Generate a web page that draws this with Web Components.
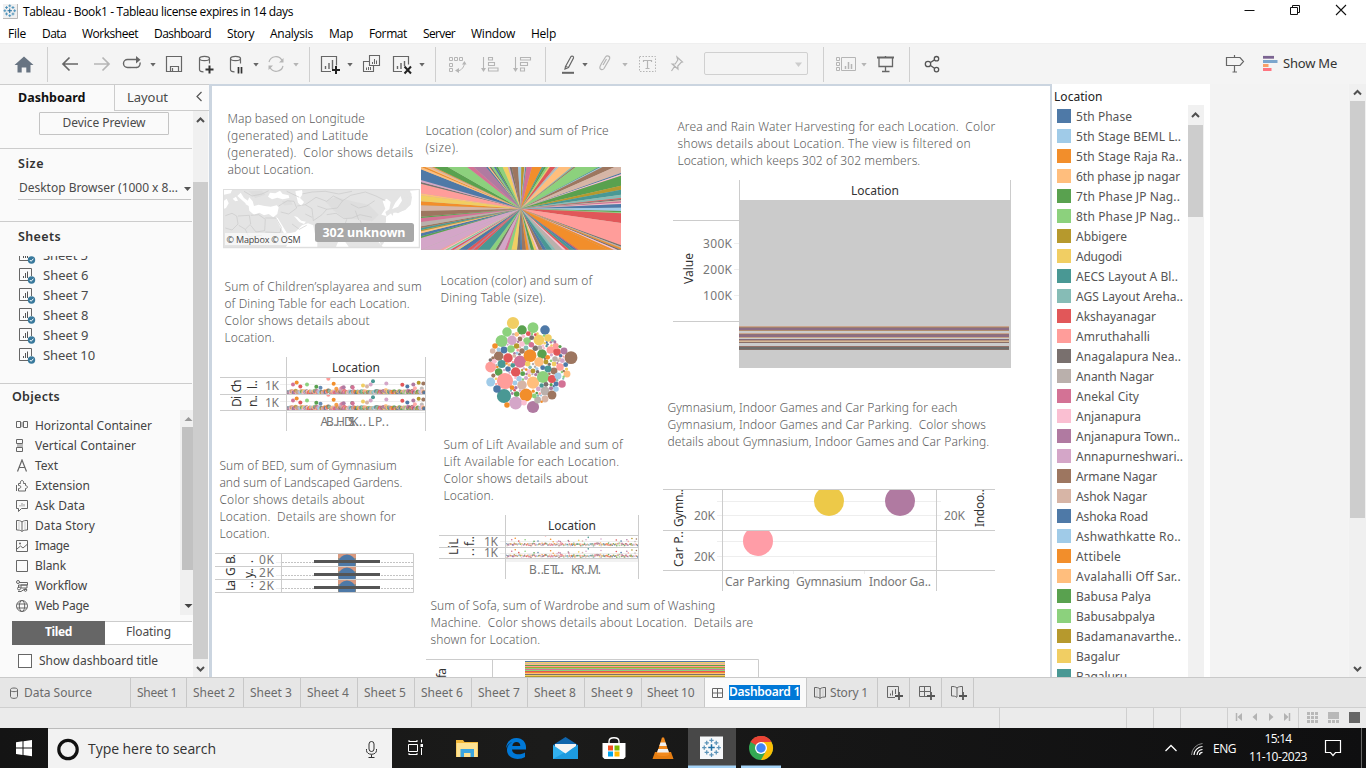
<!DOCTYPE html>
<html lang="en">
<head>
<meta charset="utf-8">
<title>Tableau - Book1</title>
<style>
html,body{margin:0;height:768px;overflow:hidden;background:#f4f4f4}
body{font-family:"Noto Sans","Open Sans",sans-serif;font-size:12px}
</style>
</head>
<body>
<tableau-app></tableau-app>
<script>
const C=['#4e79a7','#a0cbe8','#f28e2b','#ffbe7d','#59a14f','#8cd17d','#b6992d','#f1ce63','#499894','#86bcb6','#e15759','#ff9d9a','#79706e','#bab0ac','#d37295','#fabfd2','#b07aa1','#d4a6c8','#9d7660','#d7b5a6'];
function rng(s){return ()=>{s=(s*1664525+1013904223)>>>0;return s/4294967296}}
function define(name,css,html){
  customElements.define(name,class extends HTMLElement{
    constructor(){
      super();
      const t=document.createElement('template');
      t.innerHTML='<style>*{box-sizing:border-box}svg{display:block;flex:none}'+css+'</style>'+(typeof html==='function'?html(this):html);
      this.attachShadow({mode:'open'}).append(t.content.cloneNode(true));
    }
  });
}
const ft=(s,w,c='')=>`<fit-text w="${w}" class="${c}">${s}</fit-text>`;
/* svg cell whose user space is the window's own coordinate space */
const cell=(x,y,w,h,body,extra='')=>`<svg width="${w}" height="${h}" viewBox="${x} ${y} ${w} ${h}" fill="none" ${extra}>${body}</svg>`;
/* flex row: every item is [left, width, markup]; gaps become margins */
function row(items,from=0){
  let p=from;
  return items.map(([x,w,m])=>{const g=x-p;p=x+w;return `<span style="display:flex;flex:none;align-items:center;width:${w}px;margin-left:${g}px">${m}</span>`}).join('');
}
const T=(x,y,w,s,o='')=>`<text x="${x}" y="${y}" textLength="${w}" lengthAdjust="spacing" ${o}>${s}</text>`;
const V=(x,y,w,s,o='')=>`<text transform="translate(${x} ${y}) rotate(-90)" textLength="${w}" ${o}>${s}</text>`;

/* ---------- title and menu ---------- */
const tabLogo=(x,y,s,c,c2)=>{
  const k=s/16,p=(a,b,r)=>`M${x+(a-r)*k} ${y+b*k}h${2*r*k}M${x+a*k} ${y+(b-r)*k}v${2*r*k}`;
  return `<path d="${p(8,8,2.6)}" stroke="${c2}" stroke-width="${1.2*k}"/><path d="${p(8,2.2,1.7)}${p(8,13.8,1.7)}${p(2.2,8,1.7)}${p(13.8,8,1.7)}" stroke="${c}" stroke-width="${k}"/><path d="${p(4.2,4.2,1.7)}${p(11.8,4.2,1.7)}${p(4.2,11.8,1.7)}${p(11.8,11.8,1.7)}" stroke="${c}" stroke-width="${k}"/>`;
};
define('title-bar',`:host{display:flex;height:24px;background:#fff;align-items:center;color:#000;font:12px "Open Sans",sans-serif}fit-text{margin-top:-1px}`,
 row([[3,15,cell(3,0,15,24,`<rect x="3" y="4" width="14.5" height="15" fill="#f0f0f0"/><path d="M3 18.5h14.5V4" stroke="#b8b8b8"/>`+tabLogo(3,4,13.5,'#3f8ab5','#1c6a9c'))],
 [23,271,ft('Tableau - Book1 - Tableau license expires in 14 days',270)],
 [1244,12,cell(1244,0,12,24,'<path d="M1244.500 10.500h10" stroke="#111"/>')],
 [1289,13,cell(1289,0,13,24,'<path d="M1290.500 7.500h7v7h-7zM1292.500 7.500v-2h7v7h-2" stroke="#111"/>')],
 [1335,13,cell(1335,0,13,24,'<path d="M1336 5l10 10M1346 5l-10 10" stroke="#111" stroke-width="1.100"/>')]]));
define('menu-bar',`:host{display:flex;height:19px;background:#fff;align-items:center;color:#000;font:12px "Open Sans",sans-serif}`,
 row([['File',8,18],['Data',42,24],['Worksheet',82,56],['Dashboard',154,57],['Story',227,27],['Analysis',270,43],['Map',329,24],['Format',369,38],['Server',423,32],['Window',471,44],['Help',531,25]].map(([s,x,w])=>[x,w,ft(s,w)])));

/* ---------- toolbar ---------- */
const G='#666',L='#b5b5b5';
const car=(x,c=G)=>[x-3,7,cell(x-3,43,7,41,`<path d="M${x-2.700} 63h5.400l-2.700 3.600z" fill="${c}"/>`)];
const sep=x=>[x,1,cell(x,43,1,41,`<path d="M${x+.5} 47v35" stroke="#cfcfcf"/>`)];
const ic=(x,w,b)=>[x,w,cell(x,43,w,41,b)];
const db=x=>`<ellipse cx="${x}" cy="58.500" rx="5" ry="2.200"/><path d="M${x-5} 58.500v11c0 1.500 2 2.300 4 2.300M${x+5} 58.500v5"/>`;
define('tool-bar',`:host{display:flex;height:41px;background:#f4f4f4;border-top:1px solid #efefef;align-items:center;color:#333}svg{margin-top:-1px}`,
 row([
 ic(14,20,`<path d="M24 56.500l9.500 8.500h-3v7.500h-4.200v-5h-4.600v5h-4.200V65h-3z" fill="#687482"/>`),sep(47),
 ic(61,18,`<path d="M63 64h15M69.500 57.500L63 64l6.500 6.500" stroke="${G}" stroke-width="1.700"/>`),
 ic(93,18,`<path d="M94 64h15M102.500 57.500L109 64l-6.500 6.500" stroke="${L}" stroke-width="1.700"/>`),
 ic(122,20,`<path d="M131 67.500h-3.500a4 4 0 010-8h9M136.500 67.500a4 4 0 003.500-5" stroke="${G}" stroke-width="1.400"/><path d="M136 56v7.500l4.500-3.800z" fill="${G}"/><path d="M131 67.500h6" stroke="${G}" stroke-width="1.400"/>`),
 car(153),
 ic(165,18,`<path d="M166.500 56.500h15v15h-15zM170.500 71v-4.500h8V71M172.500 68v3" stroke="${G}" stroke-width="1.200"/>`),
 ic(198,17,`<g stroke="${G}" stroke-width="1.200">${db(204.500)}</g><path d="M209.500 65.500v8M205.500 69.500h8" stroke="#333" stroke-width="2"/>`),
 ic(229,17,`<g stroke="${G}" stroke-width="1.200">${db(235.500)}</g><path d="M238.500 67v6.500M241.500 67v6.500" stroke="#333" stroke-width="1.700"/>`),
 car(256),
 ic(267,18,`<path d="M269 62a7 7 0 0113-1.500M283 66a7 7 0 01-13 1.500" stroke="${L}" stroke-width="1.200"/><path d="M283.500 58v4.500h-4.500zM268.500 70v-4.500h4.500z" fill="${L}"/>`),
 car(296,L),sep(309),
 ic(320,21,`<path d="M331 71.500h-9.500v-15h15v9" stroke="${G}" stroke-width="1.200"/><path d="M325.500 69v-3M329 69v-6M332.500 69v-9" stroke="${G}" stroke-width="1.400"/><path d="M336 66v8M332 70h8" stroke="#222" stroke-width="2"/>`),
 car(350),
 ic(362,19,`<path d="M369.500 55.500h10v10h-10zM369 61.500h-5.500v10h10V66" stroke="${G}" stroke-width="1.100"/><path d="M372.500 64v-2M374.500 64v-5M376.500 64v-3.500M366.500 70v-2.500M368.500 70v-3M370.500 70v-3" stroke="${G}"/>`),
 ic(392,21,`<path d="M402 71.500h-8.500v-15h15v8" stroke="${G}" stroke-width="1.200"/><path d="M397.500 69v-3M401 69v-6M404.500 66v-5" stroke="${G}" stroke-width="1.400"/><path d="M404.500 66.500l6.500 7M411 66.500l-6.500 7" stroke="#222" stroke-width="2"/>`),
 car(422),sep(435),
 ic(447,20,`<g stroke="${L}"><path d="M449.500 57.500h3v3h-3zM454.500 57.500h3v3h-3zM459.500 57.500h3v3h-3zM449.500 63.500h3v3h-3zM449.500 68.500h3v3h-3zM464.500 62c0 5-3 8.500-7 9"/></g><path d="M462 64.500l2.500-3.500 2 3.500zM459 68v5l-4-2.500z" fill="${L}"/>`),
 ic(480,19,`<g stroke="${L}" stroke-width="1.100"><path d="M483.500 57v13"/><path d="M488.500 57.500h4v2.500h-4zM488.500 62.500h6v3h-6zM488.500 68h9.500v3h-9.500z"/></g><path d="M481 68h5l-2.500 4z" fill="${L}"/>`),
 ic(512,20,`<g stroke="${L}" stroke-width="1.100"><path d="M515.500 57v13"/><path d="M520.500 57.500h10v2.500h-10zM520.500 62.500h7v3h-7zM520.500 68h4v3h-4z"/></g><path d="M513 68h5l-2.500 4z" fill="${L}"/>`),
 sep(545),
 ic(561,15,`<path d="M565.500 66.500l5.500-10c1-1 3 0 2.500 1.500l-5 9.500-3.500 1.500zM565.500 66.500l3 1" stroke="${G}" stroke-width="1.200"/><path d="M562 72.800h12" stroke="${G}" stroke-width="2"/>`),
 car(585),
 ic(598,14,`<path d="M601.500 63.500l4-6.500c1.500-2 5-1 4 2l-5.500 9.500c-1.500 2-5 1-4-1.700M603 65l3.500-6M601.500 63.500l-1.700 3.500" stroke="${L}" stroke-width="1.200"/>`),
 car(625,L),
 ic(638,19,`<path d="M639.500 56.500h16v15h-16z" stroke="${L}" stroke-dasharray="1.500 1.500"/><path d="M643.500 62v-1.500h8V62M647.500 60.500v8M645.500 68.500h4" stroke="${L}" stroke-width="1.200"/>`),
 ic(670,14,`<path d="M677 57l5.500 5-1.500.5-3.200 3.500.2 3-5.800-5 3 0 2.600-4zM674.500 66.500l-3 4.500" stroke="${L}" stroke-width="1.200"/>`),
 ic(703,106,`<rect x="704.500" y="52.500" width="103" height="22" rx="1.500" stroke="#d0d0d0"/><path d="M795 62.500h7l-3.500 4.500z" fill="#ccc"/>`),
 sep(823),
 ic(835,22,`<path d="M836.500 57.500h3v3h-3zM836.500 62.500h3v3h-3zM836.500 67.500h3v3h-3zM841.500 57.500h14v13h-14z" stroke="${L}"/><path d="M845.500 69v-3M848.500 69v-7M851.500 69v-5" stroke="${L}" stroke-width="1.500"/>`),
 car(864,L),
 ic(876,20,`<path d="M877 57.500h17" stroke="${G}" stroke-width="2"/><path d="M879 58v8.500h13.500V58M885.500 56v1M885.500 66.500v5M882 71.500h7.500" stroke="${G}" stroke-width="1.300"/>`),
 sep(909),
 ic(924,17,`<g stroke="#555" stroke-width="1.300"><circle cx="928" cy="64" r="2.700"/><circle cx="936.500" cy="58.700" r="2.200"/><circle cx="936.500" cy="69.600" r="2.200"/><path d="M930.500 62.500l4-2.600M930.500 65.500l4 2.800"/></g>`),
 ic(1225,20,`<path d="M1226.500 57.500h13.500l3.500 4-3.500 4h-13.500zM1234.500 55v2M1234.500 65.500v7M1232.500 72h4.500" stroke="${G}" stroke-width="1.200"/>`),
 ic(1262,17,`<path d="M1263 57.300h11" stroke="#7b6491" stroke-width="2.800"/><path d="M1263 61.500h14.500" stroke="#7ca6cd" stroke-width="3"/><path d="M1263 65.500h5.500" stroke="#f9a067" stroke-width="3"/><path d="M1263 69.500h8.500" stroke="#ff7580" stroke-width="3"/>`),
 [1283,56,`<span style="font-size:13px;margin-top:-2px">${ft('Show Me',54)}</span>`]
 ]));

/* ---------- left pane ---------- */
const sheetIco=`<svg width="17" height="18" viewBox="0 0 17 18" fill="none"><path d="M9 13.500H.500V1.500h12V9" stroke="#666"/><path d="M4.500 11V9M6.500 11V6M8.500 11V4.500" stroke="#555"/><circle cx="12.500" cy="13" r="3.700" fill="#38799c"/><path d="M10.800 13l1.300 1.300 2.300-2.600" stroke="#fff"/></svg>`;
const oi={
 'Horizontal Container':[117,'<path d="M.5 2.500h4v6h-4zM7.500 2.500h4v6h-4z" stroke="#666"/><path d="M5 3h2v5H5z" fill="#bbb"/>'],
 'Vertical Container':[101,'<path d="M.5.500h6v4h-6zM.5 8.500h6v4h-6z" stroke="#666"/><path d="M1 5h6v3H1z" fill="#bbb"/>'],
 'Text':[23,'<path d="M1.500 12.500L6 1l4.500 11.500M3 8.500h6" stroke="#666" stroke-width="1.200"/>'],
 'Extension':[55,'<path d="M2.500 12h7V9.500c1.500 0 2-1 2-1.500s-1-1.500-2-1.500V4.500H7.500c.5-2-.5-3-1.500-3S4 2.500 4.500 4.500h-2v2c2 0 2.200.5 2.200 1.500S4 9.500 2.500 9.500zM.5 6v6" stroke="#666"/>'],
 'Ask Data':[50,'<path d="M.5 1.500h11v8h-6l-3 3v-3h-2z" stroke="#666"/><path d="M4 7.500V6M6 7.500V4M8 7.500V5" stroke="#999"/>'],
 'Data Story':[60,'<path d="M6 3C4.500 1.500 2.500 1.500.5 1.500v9.500c2 0 4 0 5.500 1.500 1.500-1.500 3.500-1.500 5.500-1.500V1.500C9.500 1.500 7.500 1.500 6 3zM6 3v9" stroke="#666"/><path d="M3 3v7M9 3v7" stroke="#ccc"/>'],
 'Image':[34,'<path d="M.5 1.500h11v11H.5zM1 10l3.500-3 2.500 2 4-3.500" stroke="#666"/><circle cx="4" cy="4.500" r="1" fill="#666"/>'],
 'Blank':[31,'<path d="M.5 1.500h11v11H.5z" stroke="#666"/>'],
 'Workflow':[52,'<path d="M3 3.500h8.500v2.500H2.500v3M5 6h6v3H5zM2 12.500h3l3-2h3" stroke="#666"/><circle cx="2" cy="3" r="1.500" stroke="#666"/><circle cx="3" cy="9.500" r="1.500" stroke="#666"/><circle cx="9.500" cy="11" r="1.300" stroke="#666"/>'],
 'Web Page':[54,'<circle cx="6" cy="7" r="5.500" stroke="#666"/><ellipse cx="6" cy="7" rx="2.700" ry="5.500" stroke="#666"/><path d="M1 5h10M1 9h10" stroke="#666"/>']
};
define('side-pane',`
:host{display:flex;flex-direction:column;width:209px;height:593px;background:#fafafa;color:#4a4a4a;border-top:1px solid #ccc}
.tabs{display:flex;height:26px;flex:none;font-size:13px}
.tabs b{width:114px;padding:4px 0 0 18px;color:#111;font-weight:700;font-size:12.500px}
.tabs span{display:flex;flex:1;border-left:1px solid #ccc;border-bottom:1px solid #ccc;padding:3px 6px 0 12px;justify-content:space-between}
.tabs svg{margin-top:-1px}
.body{display:grid;grid-template-columns:193px 15px;flex:1;min-height:0}
.c{display:flex;flex-direction:column}
.c>*{flex:none}
.btn{margin:1px 0 0 39px;width:130px;height:23px;border:1px solid #c4c4c4;border-radius:1px;text-align:center;line-height:20px}
hr{border:0;border-top:1px solid #ccc;margin:0;width:192px;height:1px}
h4{margin:0 0 0 18px;font-size:12.500px;font-weight:600;color:#333;height:17px;line-height:17px}
.drop{display:flex;margin:8px 0 0 18px;padding-left:1px;width:173px;height:20px;border-bottom:1px solid #c4c4c4;justify-content:space-between;line-height:15px}
.list{height:127px;overflow:hidden;margin-top:11px}
.list div{display:flex;height:20px;padding-left:19px;gap:7px;line-height:19px;font-size:13px}
.list div svg{margin-top:1px}
.obj{display:grid;grid-template-columns:180px 13px;height:205px;margin-top:5px}
.obj .o{padding-top:6px}
.o div{display:flex;height:20px;align-items:center;padding-left:16px;gap:7px;color:#444;font-size:12px}
.o fit-text{margin-top:-1px}
.seg{display:flex;margin:6px 0 0 12px;width:180px;height:24px;line-height:22px;text-align:center}
.seg b{width:93px;background:#666;color:#fff}
.seg span{flex:1;border:1px solid #ccc;border-width:1px 0;background:#fff;line-height:20px}
.chk{display:flex;gap:7px;margin:8px 0 0 18px;align-items:center;height:15px;color:#444}
.chk i{width:14px;height:14px;border:1px solid #666;background:#fff}.chk fit-text{margin-top:-1px}`,
`<div class="tabs"><b>${ft('Dashboard',67.5)}</b><span>${ft('Layout',41)}<svg width="8" height="20" viewBox="0 0 8 20" fill="none"><path d="M6.500 5L2 9.500 6.500 14" stroke="#555" stroke-width="1.200"/></svg></span></div>
<div class="body"><div class="c">
<div class="btn">${ft('Device Preview',83)}</div>
<hr style="margin-top:13px"><h4 style="margin-top:6px">${ft('Size',26)}</h4>
<div class="drop">${ft('Desktop Browser (1000 x 8...',159)}<svg width="7" height="17" viewBox="0 0 7 17"><path d="M0 7h7l-3.500 4z" fill="#555"/></svg></div>
<hr style="margin-top:21px"><h4 style="margin-top:6px">${ft('Sheets',43)}</h4>
<div class="list"><div style="margin-top:-10px">${sheetIco}${ft('Sheet 5',45)}</div>${[6,7,8,9,10].map(n=>`<div>${sheetIco}${ft('Sheet '+n,n>9?52:45.500)}</div>`).join('')}</div>
<hr><h4 style="margin:4px 0 0 12px">${ft('Objects',48)}</h4>
<div class="obj"><div class="o">${Object.entries(oi).map(([n,[w,p]])=>`<div><svg width="12" height="14" viewBox="0 0 12 14" fill="none">${p}</svg>${ft(n,w)}</div>`).join('')}</div>
${cell(180,410,13,205,'<path d="M180 410h13v205h-13z" fill="#f0f0f0"/><path d="M182 427h11v143h-11z" fill="#c1c1c1"/><path d="M184.500 421h8l-4-4z" fill="#999"/><path d="M184.500 604h8l-4 4z" fill="#444"/>')}</div>
<div class="seg"><b>${ft('Tiled',27)}</b><span>${ft('Floating',45)}</span></div>
<div class="chk"><i></i>${ft('Show dashboard title',119)}</div>
</div>
${cell(193,111,15,566,'<path d="M193 111h15v566h-15z" fill="#f0f0f0"/><path d="M193 182h15v477h-15z" fill="#cdcdcd"/><path d="M197 122l3.500-3.500 3.500 3.500M197 667l3.500 3.500 3.500-3.500" stroke="#505050" stroke-width="2"/>')}
</div>`);

/* ---------- dashboard objects ---------- */
define('float-object',`:host{display:block;position:absolute}`,`<slot></slot>`);
define('view-caption',`:host{display:flex;flex-direction:column;color:#5c5c5c;font:12px "Noto Sans",sans-serif;font-weight:300}::slotted(*){height:17px;line-height:17px}`,`<slot></slot>`);
const obj=(x,y,w,h,m)=>`<float-object style="left:${x-212}px;top:${y-86}px;width:${w}px;height:${h}px">${m}</float-object>`;
const cap=(x,y,ls)=>obj(x+.4,y-9,340,ls.length*17,`<view-caption>${ls.map(([s,w])=>ft(s,w)).join('')}</view-caption>`);
const chart=(x,y,w,h,b)=>obj(x,y,w,h,`<chart-view>${cell(x,y,w,h,b,'font-family="Noto Sans,sans-serif" font-size="12"')}</chart-view>`);
define('chart-view',`:host{display:block}`,`<slot></slot>`);

function map(){
  const z=(a)=>a.replace(/(-?[\d.]+),(-?[\d.]+)/g,(m,a,b)=>(212+a/3).toFixed(1)+' '+(84+b/3).toFixed(1));
  return `<rect x="223.500" y="189.500" width="196" height="58" fill="#e4e4e4" stroke="#dedede" stroke-width="1.500"/>
  <path fill="#fff" d="${z('M36,318L60,318 56,328 36,332ZM36,350L44,344 50,358 42,372 36,374ZM62,344L72,338 78,350 70,352ZM76,336L86,326 96,342 116,356 106,362 92,350ZM112,340L122,352 126,366 140,362 158,366 176,368 194,364 200,370 196,390 184,400 170,390 156,394 142,386 126,392 112,380 110,366 100,360 106,354ZM168,338L174,326 190,328 204,320 212,330 230,334 232,342 212,346 196,341 180,346ZM250,322L270,318 272,330 264,342 276,354 268,366 258,356ZM190,400L197,402 224,446 217,449 204,428ZM246,396L256,399 268,410 282,413 276,420 262,414ZM222,450L250,444 270,424 288,418 304,424 308,446 316,470 316,488 222,488 236,466ZM378,474L400,474 410,488 372,488ZM512,352L524,344 536,354 532,376 520,384 524,396 508,392 520,374ZM522,398L538,388 560,384 580,378 596,362 600,340 594,320 620,318 620,488 512,488 496,470 506,440 522,414ZM540,376L550,356 566,336 570,350 558,368Z')}"/>
  <path fill="#e4e4e4" d="${z('M544,382L562,372 574,352 578,338 588,342 586,362 576,378 558,388ZM576,332L584,322 600,330 590,338ZM536,388L544,386 542,396ZM510,424L516,418 514,432ZM500,466L512,458 516,476 508,486Z')}"/>
  <path fill="#d9d9d9" d="${z('M340,352L372,340 420,352 470,362 500,392 480,412 440,406 400,404 366,380ZM110,322L150,320 160,332 130,342ZM210,352L236,350 242,362 216,364Z')}" opacity=".55"/>
  <path stroke="#c6c6c6" stroke-width=".6" d="${z('M40,395L60,388 74,396 78,420 60,438 40,432M78,396L112,394 116,420 100,436 80,424M116,394L140,392 160,406 158,440 132,444 116,424M160,402L192,402 208,430 204,446 160,444M100,436L110,458 150,454M200,366L226,350 246,352 254,372 230,390 206,384M256,366L280,362 300,374 304,410M280,362L312,340 344,352 364,336 392,350 376,372 344,376 316,366M304,410L330,392 344,376M344,392L372,388 396,404 420,402 444,392 480,400M392,350L416,334 460,324 492,336 520,350M416,360L440,372 464,366 488,350M224,322L262,340M270,330L300,324 340,322 380,330 420,322M96,322L120,336 150,330 170,320M444,408L452,430 468,440M404,406L398,424M280,390L300,400M430,380L440,408M240,420L262,436 284,424')}"/>
  <rect x="225" y="233" width="77" height="12" fill="#fff" fill-opacity=".65"/>
  ${T(226.500,243,74,'© Mapbox © OSM','font-size="9" fill="#444" font-family="Open Sans,sans-serif"')}
  <rect x="315" y="223" width="99" height="19" rx="2.500" fill="#a8a8a8"/>
  ${T(322.500,237,83,'302 unknown','font-weight="700" font-size="12.500" fill="#fff"')}`;
}
function burst(){
  /* perimeter runs: walk the rectangle clockwise; [end, colour] */
  const cx=520.7,cy=208.7,out=[];
  const runs={t:[[640,2],[650,3],[660,19],[666,2],[707,4],[766,5],[785,14],[822,16],[828,0],[833,3],[838,12],[846,5],[852,0],[858,4],[872,5],[888,7],[893,17],[899,12],[918,18],[928,1],[937,6],[940,17],[943,8],[960,14],[990,2],[995,8],[1002,4],[1009,5],[1014,7],[1030,10],[1036,13],[1040,1],[1079,3],[1085,9],[1091,18],[1160,5],[1166,8],[1172,1],[1208,18],[1227,19]],
  r:[[267,19],[271,0],[275,15],[305,4],[317,6],[332,8],[342,9],[345,10],[349,12],[352,19],[356,14],[360,15],[371,0],[381,1],[385,4],[388,5],[417,10],[484,11],[488,12],[492,13],[497,2]],
  b:[[1216,12],[1205,15],[1188,2],[1100,2],[1094,10],[1085,0],[1072,8],[1061,10],[1052,15],[1030,13],[1020,9],[1003,8],[992,0],[980,18],[974,15],[966,7],[956,4],[950,13],[942,2],[930,18],[924,0],[915,12],[898,7],[886,5],[878,14],[858,17],[850,12],[833,5],[795,8],[784,10],[778,16],[765,10],[740,0],[733,7],[725,17],[715,10],[708,1],[700,5],[693,15],[684,11],[627,17]],
  l:[[462,17],[457,4],[448,0],[442,3],[438,6],[432,8],[427,18],[414,13],[402,14],[398,4],[380,18],[364,19],[352,2],[334,7],[328,3],[299,11],[294,12],[288,17],[256,0],[249,3]]};
  let p=[627,249];
  const pt=([a,b])=>`${(212+a/3).toFixed(2)} ${(84+b/3).toFixed(2)}`;
  for(const e of 'trbl')for(const [v,c] of runs[e]){
    const q=e=='t'?[v,249]:e=='r'?[1227,v]:e=='b'?[v,497]:[627,v];
    out.push(`<path d="M${cx} ${cy}L${pt(p)}L${pt(q)}z" fill="${C[c]}"/>`);p=q;
  }
  return '<rect x="421" y="167" width="200" height="83" fill="#bba"/>'+out.join('');
}
function dots(x,y,w,h,base,r,n,seed,small){
  const R=rng(seed);let s='';
  for(let i=0;i<n;i++){
    const px=x+w*(i+R())/n,u=R();
    const wave=small?1.2:1.6*Math.abs(Math.sin(i*.16));
    const py=base-(u<.95?R()*(small?2:2)+R()*wave:3+R()*h*.3);
    s+=`<circle cx="${px.toFixed(1)}" cy="${py.toFixed(1)}" r="${r}" fill="${C[Math.floor(R()*20)]}" opacity=".85"/>`;
  }
  const k=small?132/138:1;
  [[242,362,14],[253,356,2],[264,368,10],[284,362,5],[312,369,4],[348,345,11],[364,360,2],[394,370,16],[421,370,14],[452,365,7],[464,368,19],[475,362,17],[482,352,8],[522,359,17],[570,363,10],[585,368,0],[603,362,16],[619,357,6],[633,359,18]].forEach(([a,b,c])=>{
    s+=`<circle cx="${x+(a-224)/3*k}" cy="${base-(389-b)/3*(small?.7:1)}" r="${small?.8:2}" fill="${C[c]}"/>`});
  return s;
}
function scatter1(){
  return `<clipPath id="a"><path d="M287 378h138v16h-138z"/></clipPath><clipPath id="b"><path d="M287 395h138v15h-138z"/></clipPath>
  <path d="M280 384.500h145M280 401.500h145M287 412.500h138" stroke="#eee"/>
  <g clip-path="url(#a)">${dots(287,378,138,13,393.5,2,230,7)}</g><g clip-path="url(#b)">${dots(287,395,138,13,409.5,2,230,7)}</g>
  <path d="M286.500 357v74M425.500 357v74M220 377.500h205M220 394.500h205M220 410.500h205" stroke="#ccc"/>
  ${T(332,372,48,'Location','fill="#333"')}${T(265,390,14,'1K','fill="#777"')}${T(265,407,14,'1K','fill="#777"')}
  ${V(240.5,392.5,13,'Ch','fill="#333"')}${V(240.5,407,11,'Di','fill="#333"')}${V(257,389,9,'l..','fill="#333"')}${V(257,407,12,'n..','fill="#333"')}
  <g fill="#777">${T(320.5,426,16,'A..')}${T(326,426,16,'B..')}${T(336,426,8,'H')}${T(344,426,15,'D..')}${T(348,426,8,'S')}${T(351,426,15,'K..')}${T(368,426,6,'L')}${T(375,426,14,'P..')}</g>`;
}
function scatter2(){
  return `<clipPath id="c"><path d="M506 536h132v11h-132z"/></clipPath><clipPath id="d"><path d="M506 548h132v10h-132z"/></clipPath>
  <path d="M500 541.500h138M500 553.500h138" stroke="#eee"/><path d="M506 560.500h132" stroke="#f2f2f2" stroke-width="3"/>
  <g clip-path="url(#c)">${dots(506,536,132,9,546,.8,230,7,1)}</g><g clip-path="url(#d)">${dots(506,548,132,9,557.5,.8,230,7,1)}</g>
  <path d="M505.500 515v64M638.500 515v64M439 535.500h199M439 547.500h199M439 558.500h199" stroke="#ccc"/>
  ${T(548,530,48,'Location','fill="#333"')}${T(484,546,14,'1K','fill="#777"')}${T(484,557,14,'1K','fill="#777"')}
  <g fill="#333"><svg x="439" y="537" width="40" height="10" viewBox="439 537 40 10">${V(458,555,20,'LiLi')}${V(474,546,10,'f..')}</svg><svg x="439" y="549" width="40" height="10" viewBox="439 549 40 10">${V(458,555,10,'Li')}${V(474,556,8,'..')}</svg></g>
  <g fill="#777">${T(529,574,15,'B..')}${T(543,574,8,'E')}${T(550,574,14,'T..')}${T(554,574,9,'I..')}${T(571,574,8,'K')}${T(577,574,13,'R..')}${T(588,574,13,'M.')}</g>`;
}
function bubbles(){
  const b=[[249,177,18,7],[231,204,14,5],[276,198,14,4],[309,191,16,5],[345,198,14,0],[215,231,18,5],[246,229,14,17],[327,228,16,7],[354,222,11,7],[291,231,11,5],[195,246,8,2],[188,261,8,19],[206,276,14,18],[222,258,10,0],[243,255,11,5],[234,282,14,10],[270,293,18,14],[300,275,19,2],[336,270,14,4],[361,258,11,11],[381,264,11,10],[402,261,10,16],[423,281,19,18],[377,246,9,11],[182,309,16,11],[215,300,12,8],[257,324,14,10],[327,294,14,3],[206,324,11,4],[225,351,24,11],[182,354,13,1],[222,396,21,8],[201,375,11,0],[257,417,19,17],[309,429,18,16],[288,393,19,2],[309,356,18,3],[276,363,14,19],[339,339,18,5],[366,345,12,10],[345,381,13,13],[366,393,13,18],[396,360,11,14],[411,330,10,3],[390,309,11,11],[372,321,10,18],[354,315,10,8],[384,336,10,1],[345,405,10,19],[323,408,10,13],[231,423,8,2],[260,246,8,6],[372,300,7,7],[348,294,7,6],[375,285,8,13],[407,302,7,0],[234,315,8,0],[276,240,8,15],[276,261,8,18],[270,225,7,18],[305,221,7,12],[260,390,8,4],[260,211,7,3],[295,209,7,10],[316,253,8,12],[288,252,7,9],[304,242,8,14],[330,251,7,13],[246,371,7,2],[255,357,7,1],[267,344,8,1],[288,342,6,17],[297,323,7,15],[309,321,7,6],[338,311,7,0],[181,288,5,12],[189,282,5,18],[193,292,7,15],[206,257,6,1],[378,360,7,0],[378,375,8,1],[325,375,7,17],[348,361,7,12],[313,396,7,5],[282,416,8,15],[397,290,7,17],[353,280,7,2],[293,299,8,7],[248,304,7,8],[278,329,7,4],[363,373,6,16]];
  const R=rng(41),all=b.slice();
  for(let i=0;i<9000;i++){
    const t=R()*6.283,q=Math.sqrt(R())*112,x=298+q*Math.cos(t),y=311+q*Math.sin(t),r=3+R()*3.5;
    if(all.every(c=>Math.hypot(c[0]-x,c[1]-y)>c[2]+r-.8))all.push([x,y,r,Math.floor(R()*20)]);
  }
  return all.map(([x,y,r,c])=>`<circle cx="${(430+x/3).toFixed(2)}" cy="${(264+y/3).toFixed(2)}" r="${(r/3+.1).toFixed(2)}" fill="${C[c]}"/>`).join('');
}
function box(){
  let s='';
  [[554,566],[567,579],[580,592]].forEach(([t,b])=>{
    s+=`<svg x="282" y="${t}" width="131" height="${b-t}" viewBox="282 ${t} 131 ${b-t}"><path d="M282 ${t+8.500}h131" stroke="#c4c4c4" stroke-dasharray="2 1"/><path d="M338 ${t}h18v13h-18z" fill="#d99a80"/><path d="M338 ${t+4}h18v9h-18z" fill="#9a9080"/><circle cx="347" cy="${t+9}" r="8.600" fill="#4e79a7"/><path d="M314 ${t+7.5}h66" stroke="#555" stroke-width="3"/></svg>`});
  return s+`<path d="M276 562.500h5M276 575.500h5M276 588.500h5" stroke="#eee"/><path d="M215 553.500h198.500v39H215M215 566.500h198M215 579.500h198M281.500 554v38" stroke="#ccc"/>
  <g fill="#777">${T(259,564,15,'0K')}${T(259,577,15,'2K')}${T(259,590,15,'2K')}</g>
  <g fill="#333">${V(235,564,10,'B.')}${V(235,576,8,'G')}${V(235,591,11,'La')}${V(253,563,3,'.')}${V(253,578,10,'y..')}${V(253,588,7,'..')}</g>`;
}
function area(){
  const st=[[326,1,'#c9a58f'],[327,1,'#a08070'],[328,2,'#8c6d84'],[330,1,'#b08c6e'],[333,1,'#c9a58f'],[334,1,'#8f7077'],[335,2,'#8c6d84'],[337,1,'#c6a488'],[339,1,'#806a78'],[340,1,'#b89582'],[341,1,'#d5b795'],[342,1,'#8a6f68'],[346,1,'#957068'],[347,2,'#6d6d6b'],[349,1,'#82706a']];
  return `<path d="M739 200h272v168H739z" fill="#cbcbcb"/>${st.map(([y,h,c])=>`<path d="M739 ${y}h270v${h}h-270z" fill="${c}"/>`).join('')}
  <path d="M739.500 180v20M1010.500 180v20M673 220.500h66M673 321.500h66" stroke="#ccc"/><path d="M734 243.500h5M734 269.500h5M734 295.500h5" stroke="#eee"/>
  ${T(851,195,48,'Location','fill="#333"')}<g fill="#777">${T(703,248,29,'300K')}${T(703,274,29,'200K')}${T(703,300,29,'100K')}</g>${V(693,284,31,'Value','fill="#333"')}`;
}
function gym(){
  return `<path d="M717 501.500h224M717 515.500h224M717 541.500h219M717 556.500h219M793.500 571v3M864.500 571v3" stroke="#eee"/>
  <clipPath id="e"><path d="M723 490h213v40H723z"/></clipPath><clipPath id="f"><path d="M723 531h213v39H723z"/></clipPath>
  <g clip-path="url(#e)"><circle cx="829" cy="501" r="15" fill="#edc948"/><circle cx="900" cy="501" r="15" fill="#b07aa1"/></g><g clip-path="url(#f)"><circle cx="758" cy="541" r="15" fill="#ff9da7"/></g>
  <path d="M663 489.500h332M663 530.500h332M663 570.500h332M722.500 490v101M936.500 490v101" stroke="#ccc"/>
  <g fill="#777">${T(694,520,21,'20K')}${T(694,561,21,'20K')}${T(944,520,21,'20K')}${T(725,586,65,'Car Parking')}${T(796,586,66,'Gymnasium')}${T(869,586,62,'Indoor Ga..')}</g>
  <g fill="#333">${V(683,527,38,'Gymn..')}${V(683,567,36,'Car P..')}${V(984,527,38,'Indoo..')}</g>`;
}
function sofa(){
  const k=[0,7,19,3,4,11,6,5,14,5,10,2,3,12,7,6],cs=k.map((c,i)=>`<path d="M525 ${661+i}h200v1h-200z" fill="${C[c]}"/>`).join('');
  return `<path d="M426 659.500h332.500V677M492.500 660v17" stroke="#ccc"/>${cs}${V(446,678,10,'fa','fill="#333"')}`;
}
define('dash-canvas',`:host{display:block;position:relative;width:843px;height:593px;background:#fff;border:solid #cbd5e0;border-width:2px 2px 0 3px;overflow:hidden}`,
 cap(227,119,[['Map based on Longitude',137.5],['(generated) and Latitude',141],['(generated).  Color shows details',186],['about Location.',86.5]])+
 chart(223,189,197,60,map())+
 cap(425,131,[['Location (color) and sum of Price',183.5],['(size).',33.5]])+chart(421,167,200,83,burst())+
 cap(224,287,[["Sum of Children’splayarea and sum",197.5],['of Dining Table for each Location.',185.5],['Color shows details about',145.5],['Location.',50.5]])+chart(220,356,207,76,scatter1())+
 cap(440,281,[['Location (color) and sum of',152],['Dining Table (size).',105.5]])+chart(484,314,98,102,bubbles())+
 cap(219,466,[['Sum of BED, sum of Gymnasium',177.5],['and sum of Landscaped Gardens.',183],['Color shows details about',145.5],['Location.  Details are shown for',176.5],['Location.',50.5]])+chart(215,552,200,42,box())+
 cap(443,445,[['Sum of Lift Available and sum of',179.5],['Lift Available for each Location.',176],['Color shows details about',145],['Location.',50.5]])+chart(439,514,201,66,scatter2())+
 cap(430,606,[['Sum of Sofa, sum of Wardrobe and sum of Washing',285],['Machine.  Color shows details about Location.  Details are',323],['shown for Location.',110]])+chart(426,658,334,19,sofa())+
 cap(677,127,[['Area and Rain Water Harvesting for each Location.  Color',318],['shows details about Location. The view is filtered on',293.5],['Location, which keeps 302 of 302 members.',243]])+chart(672,180,340,190,area())+
 cap(667,408,[['Gymnasium, Indoor Games and Car Parking for each',290],['Gymnasium, Indoor Games and Car Parking.  Color shows',318.5],['details about Gymnasium, Indoor Games and Car Parking.',322]])+chart(663,488,333,104,gym()));

/* ---------- legend ---------- */
const leg=[['5th Phase',56],['5th Stage BEML L..',105],['5th Stage Raja Ra..',106],['6th phase jp nagar',104],['7th Phase JP Nag..',104],['8th Phase JP Nag..',104],['Abbigere',51],['Adugodi',46],['AECS Layout A Bl..',102],['AGS Layout Areha..',107],['Akshayanagar',80],['Amruthahalli',74],['Anagalapura Nea..',105],['Ananth Nagar',78],['Anekal City',63],['Anjanapura',65],['Anjanapura Town..',104],['Annapurneshwari..',107],['Armane Nagar',81],['Ashok Nagar',71],['Ashoka Road',72],['Ashwathkatte Ro..',105],['Attibele',45],['Avalahalli Off Sar..',105],['Babusa Palya',75],['Babusabpalya',79],['Badamanavarthe..',105],['Bagalur',44],['Bagaluru',51]];
define('color-legend',`:host{display:grid;grid-template-columns:136px 22px;grid-template-rows:20px 573px;width:158px;height:593px;background:#fff;color:#555;overflow:hidden}
h5{grid-column:1/3;margin:0;font-size:12px;font-weight:400;color:#222;padding:4px 0 0 2px;height:20px}
.i{display:flex;height:20px;align-items:center;padding-left:5px;gap:5px}.i i{width:14px;height:14px;flex:none}.l{padding-top:2px}`,
`<h5>${ft('Location',48.5)}</h5><div class="l">${leg.map(([s,w],i)=>`<div class="i"><i style="background:${C[i%20]}"></i>${ft(s,w)}</div>`).join('')}</div>
${cell(1188,104,22,573,'<path d="M1188 105h16v572h-16z" fill="#f1f1f1"/><path d="M1188 125h15v92h-15z" fill="#cdcdcd"/><path d="M1192 117l3.500-3.500 3.500 3.500" stroke="#505050" stroke-width="2"/>')}`);

/* ---------- bottom ---------- */
const plus=(x,y)=>`<path d="M${x} ${y-4}v8M${x-4} ${y}h8" stroke="#555" stroke-width="1.800"/>`;
define('sheet-tabs',`:host{display:flex;height:31px;background:#e6e6e6;border-top:1px solid #c9c9c9;border-bottom:1px solid #cfcfcf;color:#6b6b6b;font-size:12px}
div{display:flex;align-items:center;border-right:1px solid #c8c8c8;flex:none}.on{background:#fafafa}.sel{background:#0078d7;color:#fff;font-weight:600;height:15px;line-height:14px;display:flex}`,
(()=>{const e=[131,187,244,301,358,415,472,528,585,642,705];
 let h=`<div style="width:131px;padding-left:9px;gap:5px">${cell(0,0,10,12,'<path d="M1.500 2.500v7c0 2.500 7 2.500 7 0v-7c0-2-7-2-7 0zM1.500 3.500c0 1.500 7 1.500 7 0" stroke="#666"/>')}${ft('Data Source',68)}</div>`;
 for(let i=1;i<=10;i++)h+=`<div style="width:${e[i]-e[i-1]}px;padding-left:${i==10?5:6}px">${ft('Sheet '+i,i==1?40:i==10?47.5:42)}</div>`;
 h+=`<div class="on" style="width:102px;padding-left:7px;gap:5px">${cell(0,0,12,12,'<path d="M.5 1.500h10v9H.5zM5.500 1.500v9M.5 6h10" stroke="#666"/>')}<span class="sel">${ft('Dashboard 1',71)}</span></div>
 <div style="width:71px;padding-left:7px;gap:4px">${cell(0,0,12,13,oi['Data Story'][1])}${ft('Story 1',38)}</div>
 <div style="width:32px;padding-left:9px">${cell(0,0,17,16,'<path d="M8 12.500H.5v-11h11V7" stroke="#666"/><path d="M3.500 10.500v-2M5.500 10.500v-5M8.500 9V4" stroke="#666"/>'+plus(12,11))}</div>
 <div style="width:32px;padding-left:9px">${cell(0,0,17,16,'<path d="M8 11.500H.5v-10h11V7M5.500 1.500v10M.5 6.500h11" stroke="#666"/>'+plus(12,11))}</div>
 <div style="width:32px;padding-left:9px">${cell(0,0,17,16,'<path d="M6 12.500C4.500 11 2.500 11 .5 11V1.500c2 0 4 0 5.500 1.500 1.500-1.500 3.500-1.500 5.500-1.500V7M6 3v9" stroke="#666"/>'+plus(12,11))}</div>`;
 return h})());
const ln=x=>[x,1,cell(x,708,1,20,`<path d="M${x+.5} 708v20" stroke="#cfcfcf"/>`)];
define('status-bar',`:host{display:flex;height:20px;background:#ebebeb}`,
 row([ln(999),ln(1126),ln(1153),ln(1180),ln(1227),
 [1234,60,cell(1234,708,60,20,'<path d="M1236.500 713v8M1289.500 713v8" stroke="#b3b3b3" stroke-width="1.500"/><path d="M1242 713v8l-4.500-4zM1257 713v8l-4.500-4zM1269 713v8l4.500-4zM1284 713v8l4.500-4z" fill="#b3b3b3"/>')],
 ln(1298),
 [1306,54,cell(1306,708,54,20,[0,4,8].map(a=>[0,4,8].map(b=>`<path d="M${1307+a} ${712+b}h3v3h-3z" fill="#b8b8b8"/>`).join('')).join('')+'<path d="M1328 712h11v7h-11zM1328 720h3v3h-3zM1332 720h3v3h-3zM1336 720h3v3h-3z" fill="#b8b8b8"/><path d="M1349 712h11v11h-11z" fill="#666"/>')]]));

define('task-bar',`:host{display:flex;height:40px;background:linear-gradient(90deg,#141414,#1b1b1a 40%,#161616 60%,#0f0f10);color:#fff;font-family:"Open Sans",sans-serif}
.s{display:flex;width:344px;height:40px;background:#f2f2f2;border-top:1px solid #bbb;color:#333;font-size:14px;flex:none;align-items:center}
.clock{display:flex;flex-direction:column;align-items:center;line-height:18px;width:60px}`,
(()=>{const k=(x,w,b)=>[x,w,cell(x,728,w,40,b)];
return row([
 k(0,48,'<path d="M16 742.300l6.500-1v6.300H16zM23.500 741.200l8.500-1.200v7.600h-8.500zM16 748.500h6.500v6.400l-6.500-1zM23.500 748.500H32v7.700l-8.500-1.200z" fill="#fff"/>'),
 [48,344,`<div class="s">${row([
   [8,24,cell(56,728,24,38,'<circle cx="68" cy="747.500" r="9.200" stroke="#111" stroke-width="3.200"/>')],
   [40,130,ft('Type here to search',128)],
   [317,14,cell(365,728,14,38,'<rect x="369" y="739.500" width="5" height="10" rx="2.500" stroke="#333"/><path d="M366.500 747v1.500c0 5 10 5 10 0V747M371.500 752.500v3M368.500 755.500h6" stroke="#333"/>')]])}</div>`],
 k(406,20,'<path d="M409 741.500h8M409 754.500h8M408.500 744.500h9v7h-9zM409 740v2M417 740v2M409 753v2M417 753v2M421.500 739.500v3M421.500 748v7" stroke="#fff"/><path d="M420.500 744h2.500v3h-2.500z" fill="#fff"/>'),
 k(455,24,'<path d="M456 740h7l1.500 2H478v15h-22z" fill="#f2b83a"/><path d="M456.500 743h21v14h-21z" fill="#fde293"/><path d="M460.500 749h13.500v8h-3.500v-4h-6.500v4h-3.500z" fill="#3aa5e0"/>'),
 k(505,23,'<path d="M506 748.500c.5-7 5-10.500 10.500-10.500 6 0 9.500 4.500 9.500 9v2.500h-14c.2 3 2.500 4.800 6.500 4.800 2.500 0 4.800-.8 6.500-1.800v4.500c-2 1.200-4.500 2-7.500 2-6.500 0-10.500-4-10.500-9 0-3.500 1.800-6.300 5-7.800-2.800.6-4.700 2.800-6 6.300zM512.300 746h8c0-2.500-1.500-4-3.800-4-2.300 0-3.800 1.600-4.200 4z" fill="#0078d7"/>'),
 k(552,27,'<path d="M553 745l12.500-8 12.500 8v13h-25z" fill="#0f65ad"/><path d="M555 744h21v9h-21z" fill="#f4f4f4"/><path d="M553 745l12.500 8.500L578 745v14h-25z" fill="#32b0ee"/><path d="M553 759l25-14v14z" fill="#1c9be0"/><path d="M555 744h21v1.500l-10.500 8-10.500-8z" fill="#f4f4f4"/>'),
 k(601,26,'<path d="M602.500 743h23v14l-2 2h-19l-2-2z" fill="#fff"/><path d="M609 745v-3.500c0-5 10-5 10 0v3.500" stroke="#fff" stroke-width="1.300"/><path d="M608 745.500h5v5h-5z" fill="#f25022"/><path d="M614.500 745.500h5v5h-5z" fill="#7fba00"/><path d="M608 751.500h5v5h-5z" fill="#00a4ef"/><path d="M614.500 751.500h5v5h-5z" fill="#ffb900"/>'),
 k(651,24,'<path d="M655 752h16l2.500 7h-21z" fill="#e67e12"/><path d="M662 737.500h2l5.500 17c-2 2-11 2-13 0z" fill="#f28a1e"/><path d="M660.500 742.500h5l1.200 3.500h-7.400zM658.200 749h9.600l1.200 3.500h-12z" fill="#f1f1f1"/>'),
 k(688,48,'<path d="M688 728h48v40h-48z" fill="#484848"/><path d="M688 765.500h48v2.500h-48z" fill="#a5d3f7"/><path d="M700 736.500h23v22.500h-23z" fill="#f6f8fa"/>'+tabLogo(701.5,737.5,20,'#5b93b8','#1f6fa3')),
 k(741,40,'<path d="M741 765.500h40v2.500h-40z" fill="#a5d3f7"/><circle cx="761" cy="748" r="12" fill="#34a853"/><path d="M761 748L750.600 742a12 12 0 0120.800 0z" fill="#ea4335"/><path d="M750.600 742A12 12 0 01761 736a12 12 0 0110.400 6H761z" fill="#ea4335"/><path d="M761 742h10.400A12 12 0 01761 760l5-9z" fill="#fbbc05"/><circle cx="761" cy="748" r="6" fill="#fff"/><circle cx="761" cy="748" r="4.700" fill="#4285f4"/>'),
 k(1164,14,'<path d="M1165.500 751l5.500-5.500 5.500 5.500" stroke="#fff" stroke-width="1.300"/>'),
 k(1189,15,'<path d="M1191.500 755a12 12 0 0111-11.500" stroke="#888"/><path d="M1194 755a9 9 0 018.500-8.500M1197 755a6 6 0 015.500-5.500M1199.500 755a3 3 0 013-2.700" stroke="#fff" stroke-width="1.200"/>'),
 [1213,25,`<span style="font-size:12px">${ft('ENG',23)}</span>`],
 [1248,60,`<span class="clock">${ft('15:14',27)}${ft('11-10-2023',58)}</span>`],
 k(1324,19,'<path d="M1325.500 740.500h15v12h-5l-2.500 3-2.500-3h-5z" stroke="#fff" stroke-width="1.200"/>'),
 k(1361,1,'<path d="M1361.500 728v40" stroke="#666"/>')])})());

define('tableau-app',`:host{display:flex;flex-direction:column;width:1366px;height:768px;background:#f4f4f4;overflow:hidden}
main{display:flex;height:593px;flex:none}.gap{width:138px;background:#f3f3f3}`,
`<title-bar></title-bar><menu-bar></menu-bar><tool-bar></tool-bar>
<main><side-pane></side-pane><dash-canvas></dash-canvas><color-legend></color-legend><div class="gap"></div>
${cell(1348,84,18,593,'<path d="M1349 84h17v593h-17z" fill="#f0f0f0"/><path d="M1350 101h15v417h-15z" fill="#cdcdcd"/><path d="M1354 94.500l3.500-3.500 3.500 3.500M1354 667l3.500 3.500 3.500-3.500" stroke="#505050" stroke-width="2"/>')}</main>
<sheet-tabs></sheet-tabs><status-bar></status-bar><task-bar></task-bar>`);

/* one line of text spread to the width given in w */
customElements.define('fit-text',class extends HTMLElement{
  constructor(){super();this.attachShadow({mode:'open'}).innerHTML='<style>:host{display:inline-block;white-space:pre;flex:none}</style><span><slot></slot></span>'}
  connectedCallback(){
    const s=this.shadowRoot.querySelector('span'),w=+this.getAttribute('w'),n=this.textContent.length;
    if(!w||!n)return;
    s.style.letterSpacing=((w-s.getBoundingClientRect().width)/n).toFixed(3)+'px';
  }
});
</script>
</body>
</html>
